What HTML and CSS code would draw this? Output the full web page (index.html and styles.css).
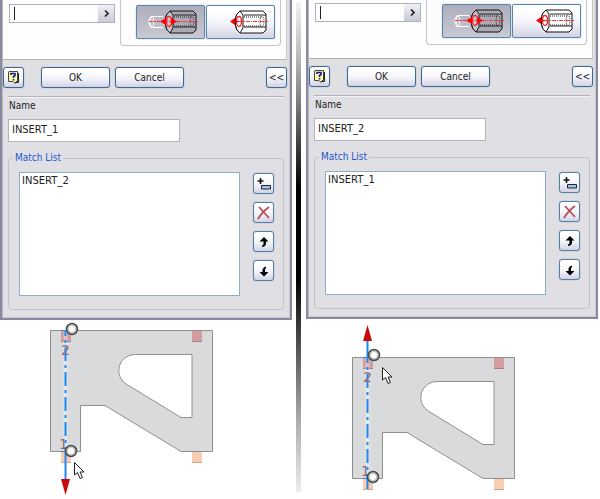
FILE: index.html
```
<!DOCTYPE html>
<html lang="en">
<head>
    <meta charset="UTF-8">
    <meta name="viewport" content="width=device-width, initial-scale=1.0">
    <title>iMate match list</title>
    <link rel="stylesheet" href="styles.css">
</head>
<body>
    <!-- shared drawings -->
    <svg class="defs" width="0" height="0" aria-hidden="true">
        <defs>
            <symbol id="cylinder" viewBox="0 0 34 24" overflow="visible">
                <path d="M5 1H28L31 4V20L28 23H5L1 18V6Z" fill="var(--body)" stroke="#111"/>
                <path d="M9 5H31M9 17H31" stroke="#222" fill="none"/>
                <path d="M5 1L8 5V18L5 23L2 20L0.500 15V8L2 4Z" fill="var(--face)" stroke="#111"/>
                <path d="M9 7H27M9 16H27" stroke="#222" stroke-dasharray="1 1" fill="none"/>
                <ellipse cx="27" cy="11.500" rx="2" ry="5" stroke="#222" stroke-dasharray="1 1" fill="none"/>
                <ellipse cx="4" cy="11.500" rx="2.500" ry="5" fill="none" stroke="#f22" stroke-width="1.300"/>
                <path d="M4 11.500H33" stroke="#f33" stroke-dasharray="4 1 1 1"/>
            </symbol>
            <symbol id="bracket" viewBox="0 0 164 134" overflow="visible">
                <path d="M11 122h10v10h-10zM142 122h10v10h-10z" fill="#f8cdb0"/>
                <path d="M11 132.500h10M142 132.500h10" stroke="#c9a48c"/>
                <path fill-rule="evenodd" fill="#d9dadb" stroke="#8f8f8f" d="M0.500 0.500H162.500V121.500H131L55 75.500H30.500V121.500H0.500ZM142 24.500H85.500A16 16 0 0 0 77 54.500L131 87.500H142Z"/>
                <path d="M11 1h10v10h-10zM142 1h10v10h-10z" fill="#d49c9f"/>
                <path d="M11 11.500h10M142 11.500h10" stroke="#a98085"/>
                <path d="M15.500 1V121" stroke="#fff" stroke-opacity=".35" stroke-width="4"/>
                <path d="M15.500 1V121" stroke="#1e88f5" stroke-width="2" stroke-dasharray="14 4 3 4" stroke-dashoffset="9"/>
                <text x="11" y="25" class="pin-no">2</text>
                <text x="9" y="119" class="pin-no">1</text>
                <path d="M11 0.500h5M11 121.500h5" stroke="#1e88f5"/>
            </symbol>
            <symbol id="ring" viewBox="0 0 14 14" overflow="visible">
                <circle cx="7" cy="7" r="5.500" fill="#c4c4c2" stroke="#444b4b" stroke-width="1.500"/>
                <circle cx="7" cy="7" r="3" fill="#fff"/>
            </symbol>
            <symbol id="pointer" viewBox="0 0 12 18" overflow="visible">
                <path d="M0.500 0.500V13L3.500 10.500L6 16.500L8.500 15.500L6 10H10Z" fill="#fff" stroke="#222"/>
            </symbol>
            <symbol id="help" viewBox="0 0 12 13" overflow="visible">
                <path d="M1 0.500H9.500V10.500H8L7 12.500L5 10.500H0.500V1Z" fill="#ffffa8" stroke="#444"/>
                <path d="M10.500 2V11.500H8" fill="none" stroke="#222"/>
                <path d="M3 4V2.500H7V4.500L5.500 5.500V7M5.500 8V9.500" fill="none" stroke="#1515a0" stroke-width="1.600"/>
            </symbol>
            <symbol id="add" viewBox="0 0 14 14" overflow="visible">
                <path d="M0.500 4H6.500M3.500 1V7" stroke="#111" stroke-width="1.600"/>
                <path d="M4.500 8.500H13.500V12H4.500Z" fill="#9fc5ee" stroke="#222"/>
            </symbol>
            <symbol id="remove" viewBox="0 0 14 14" overflow="visible">
                <path d="M2 1L12 12M12 1Q5 6 1 13" fill="none" stroke="#b94f52" stroke-width="1.800"/>
            </symbol>
            <symbol id="up" viewBox="0 0 14 14" overflow="visible">
                <path d="M7 2L11.500 6.500H9V9Q8.500 11.500 5 12V10.500Q6.500 10 6.500 9V6.500H2.500Z"/>
            </symbol>
            <symbol id="down" viewBox="0 0 14 14" overflow="visible">
                <path d="M7 12.500L2.500 8H5.500V6Q6 3 9 2.500V4Q8 4.500 8 6V8H11.500Z"/>
            </symbol>
        </defs>
    </svg>

    <main class="compare">
        <section class="side">
            <form class="dialog">
                <div class="options">
                    <div class="offset">
                        <input type="text" aria-label="Offset" value="">
                        <button type="button" aria-label="More offsets"><svg width="5" height="7"><path d="M1 0.500L4 3.500L1 6.500" fill="none" stroke="#222" stroke-width="1.600"/></svg></button>
                    </div>
                    <div class="solution">
                        <button type="button" class="pressed" aria-label="Opposed">
                            <svg width="52" height="24">
                                <path d="M18 6.500H6L4 10V14L6 17.500H18" fill="none" stroke="#fff"/>
                                <ellipse cx="7" cy="12" rx="2" ry="5" fill="none" stroke="#fff"/>
                                <use href="#cylinder" x="20" y="0" width="34" height="24"/>
                                <path d="M4 11.500H24" stroke="#f33" stroke-dasharray="3 1"/>
                                <path d="M15 11.500L21 8V15ZM32 11.500L26 8V15Z" fill="#f00"/>
                            </svg>
                        </button>
                        <button type="button" aria-label="Aligned">
                            <svg width="52" height="24">
                                <use href="#cylinder" x="20" y="0" width="34" height="24"/>
                                <path d="M15 11.500L20 8V15ZM19 11H24V12H19Z" fill="#f00"/>
                            </svg>
                        </button>
                    </div>
                </div>
                <div class="actions">
                    <button type="button" class="icon" aria-label="Help"><svg width="12" height="13"><use href="#help" width="12" height="13"/></svg></button>
                    <button type="button" class="wide">OK</button>
                    <button type="button" class="wide">Cancel</button>
                    <button type="button" class="icon less">&lt;&lt;</button>
                </div>
                <div class="details">
                    <label for="name-1">Name</label>
                    <input type="text" id="name-1" class="name" value="INSERT_1">
                    <fieldset>
                        <legend>Match List</legend>
                        <select size="8" aria-label="Match List">
                            <option>INSERT_2</option>
                        </select>
                        <div class="tools">
                            <button type="button" class="icon" aria-label="Add"><svg width="14" height="14"><use href="#add" width="14" height="14"/></svg></button>
                            <button type="button" class="icon" aria-label="Remove"><svg width="14" height="14"><use href="#remove" width="14" height="14"/></svg></button>
                            <button type="button" class="icon" aria-label="Move up"><svg width="14" height="14"><use href="#up" width="14" height="14"/></svg></button>
                            <button type="button" class="icon" aria-label="Move down"><svg width="14" height="14"><use href="#down" width="14" height="14"/></svg></button>
                        </div>
                    </fieldset>
                </div>
            </form>
            <svg class="part" width="290" height="178" role="img" aria-label="Bracket, axis pointing down">
                <g transform="translate(50 10)">
                    <use href="#bracket" width="164" height="134"/>
                    <path d="M15.500 121V149" stroke="#1e88f5" stroke-width="2"/>
                    <path d="M11 149H20L15.500 165Z" fill="#c90b0b"/>
                    <use href="#ring" x="15" y="-8" width="14" height="14"/>
                    <use href="#ring" x="14" y="114" width="14" height="14"/>
                    <use href="#pointer" x="24" y="132" width="12" height="18"/>
                </g>
            </svg>
        </section>

        <div class="divider"></div>

        <section class="side">
            <form class="dialog">
                <div class="options short">
                    <div class="offset">
                        <input type="text" aria-label="Offset" value="">
                        <button type="button" aria-label="More offsets"><svg width="5" height="7"><path d="M1 0.500L4 3.500L1 6.500" fill="none" stroke="#222" stroke-width="1.600"/></svg></button>
                    </div>
                    <div class="solution">
                        <button type="button" class="pressed" aria-label="Opposed">
                            <svg width="52" height="24">
                                <path d="M18 6.500H6L4 10V14L6 17.500H18" fill="none" stroke="#fff"/>
                                <ellipse cx="7" cy="12" rx="2" ry="5" fill="none" stroke="#fff"/>
                                <use href="#cylinder" x="20" y="0" width="34" height="24"/>
                                <path d="M4 11.500H24" stroke="#f33" stroke-dasharray="3 1"/>
                                <path d="M15 11.500L21 8V15ZM32 11.500L26 8V15Z" fill="#f00"/>
                            </svg>
                        </button>
                        <button type="button" aria-label="Aligned">
                            <svg width="52" height="24">
                                <use href="#cylinder" x="20" y="0" width="34" height="24"/>
                                <path d="M15 11.500L20 8V15ZM19 11H24V12H19Z" fill="#f00"/>
                            </svg>
                        </button>
                    </div>
                </div>
                <div class="actions">
                    <button type="button" class="icon" aria-label="Help"><svg width="12" height="13"><use href="#help" width="12" height="13"/></svg></button>
                    <button type="button" class="wide">OK</button>
                    <button type="button" class="wide">Cancel</button>
                    <button type="button" class="icon less">&lt;&lt;</button>
                </div>
                <div class="details">
                    <label for="name-2">Name</label>
                    <input type="text" id="name-2" class="name" value="INSERT_2">
                    <fieldset>
                        <legend>Match List</legend>
                        <select size="8" aria-label="Match List">
                            <option>INSERT_1</option>
                        </select>
                        <div class="tools">
                            <button type="button" class="icon" aria-label="Add"><svg width="14" height="14"><use href="#add" width="14" height="14"/></svg></button>
                            <button type="button" class="icon" aria-label="Remove"><svg width="14" height="14"><use href="#remove" width="14" height="14"/></svg></button>
                            <button type="button" class="icon" aria-label="Move up"><svg width="14" height="14"><use href="#up" width="14" height="14"/></svg></button>
                            <button type="button" class="icon" aria-label="Move down"><svg width="14" height="14"><use href="#down" width="14" height="14"/></svg></button>
                        </div>
                    </fieldset>
                </div>
            </form>
            <svg class="part" width="290" height="178" role="img" aria-label="Bracket, axis pointing up">
                <g transform="translate(46 38)">
                    <use href="#bracket" width="164" height="134"/>
                    <path d="M15.500 0V-17M15.500 117V132" stroke="#1e88f5" stroke-width="2"/>
                    <path d="M11 -16H20L15.500 -32Z" fill="#c90b0b"/>
                    <use href="#ring" x="15" y="-9" width="14" height="14"/>
                    <use href="#ring" x="14" y="113" width="14" height="14"/>
                    <use href="#pointer" x="30" y="10" width="12" height="18"/>
                </g>
            </svg>
        </section>
    </main>
</body>
</html>
```
FILE: styles.css
```
* {
    box-sizing: border-box;
}
body {
    margin: 0;
    background-color: white;
    font-family: "DejaVu Sans Condensed", "DejaVu Sans", sans-serif;
    font-size: 10px;
    color: #222;
}
.defs {
    position: absolute;
}
.compare {
    display: grid;
    grid-template-columns: 1fr 6px 1fr;
    column-gap: 4px;
    padding-right: 2px;
}
.side {
    min-width: 0;
}
.side svg {
    display: block;
    flex: none;
}
.divider {
    height: 490px;
    margin: 2px 1px 0 0;
    background: linear-gradient(#f2f2f2, #c0c0c0 10%, #808080 20%, #000 38%, #000 56%, #383838 66%, #aaa 85%, #ededed);
}
.dialog {
    margin: 0;
    background-color: #e0dfe4;
    border: solid #8a889f;
    border-width: 0 2px 2px;
    box-shadow: inset 1px 0 #b9b9c6, inset -1px -1px #c9c8d2;
}
button {
    display: flex;
    align-items: center;
    justify-content: center;
    padding: 0;
    font: inherit;
    color: #222;
    background: linear-gradient(#fff 20%, #f0f0f8 60%, #d3d2e4);
    border: 1px solid #3c6a92;
    border-radius: 3px;
    box-shadow: 0 0 1px #4d7ba3;
}
input {
    font: 11px "DejaVu Sans Condensed", "DejaVu Sans", sans-serif;
    color: #222;
    background-color: white;
}

/* top of the dialog */
.options {
    display: flex;
    align-items: flex-end;
    justify-content: space-between;
    height: 60px;
    margin: 0 3px 0 1px;
    padding: 0 5px 13px 6px;
    background-color: #fdfdfe;
    border-bottom: 1px solid #b5b5ae;
    border-right: 1px solid #cccbc2;
    overflow: hidden;
}
.short {
    height: 59px;
}
.offset {
    display: flex;
    width: 106px;
    height: 19px;
    margin-bottom: 23px;
    border: 1px solid #aab2bd;
}
.offset input {
    flex: 1;
    min-width: 0;
    padding: 0;
    margin: 2px 4px;
    border: none;
    border-left: 1px solid #222;
    outline: none;
}
.offset button {
    width: 16px;
    border: none;
    border-radius: 0;
    box-shadow: none;
    background: linear-gradient(#f0f0f6, #c9c9d9);
}
.solution {
    display: flex;
    gap: 1px;
    padding: 16px 5px 6px 15px;
    border: 1px solid #c3c3c8;
    border-top: none;
    border-radius: 0 0 4px 4px;
}
.solution button {
    --body: #fff;
    --face: #fff;
    width: 69px;
    height: 34px;
    border-color: #5c86a8;
    border-radius: 2px;
}
.solution .pressed {
    --body: #aaa9b4;
    --face: #c5c4cd;
    background: linear-gradient(#adadbd, #c9c9d4);
}
.solution svg {
    overflow: visible;
}

/* button row */
.actions {
    display: flex;
    padding: 7px 3px 0 1px;
}
.icon {
    width: 21px;
    height: 21px;
}
.wide {
    width: 69px;
    height: 21px;
    margin-left: 5px;
}
.icon + .wide {
    margin-left: 17px;
}
.less {
    margin-left: auto;
}

/* name and match list */
.details {
    margin: 8px 6px 0;
    padding: 2px 0 8px;
    border-top: 1px solid #b4b4b6;
    box-shadow: inset 0 1px #f4f4f6;
}
.details label {
    display: block;
    padding-left: 1px;
    line-height: 14px;
}
.name {
    display: block;
    width: 172px;
    height: 23px;
    margin: 6px 0 10px;
    padding: 0 3px 2px;
    border: 1px solid #b2b4ba;
}
fieldset {
    display: flex;
    gap: 13px;
    margin: 0;
    min-width: 0;
    padding: 8px 9px 13px 10px;
    border: 1px solid #c3c3ca;
    border-radius: 4px;
}
legend {
    margin-left: -6px;
    padding: 0 2px;
    line-height: 12px;
    color: #1f55cf;
}
select {
    flex: 1;
    min-width: 0;
    height: 124px;
    padding: 2px 0;
    font: 10px "DejaVu Sans", sans-serif;
    color: #222;
    background-color: white;
    border: 1px solid #8fadc4;
    border-radius: 0;
    overflow: hidden;
}
option {
    padding: 0 2px;
}
.tools {
    display: flex;
    flex-direction: column;
    gap: 8px;
    padding-top: 1px;
}
.tools .icon {
    border-color: #5480a6;
}

/* part drawing */
.part {
    max-width: 100%;
    overflow: visible;
}
.pin-no {
    font: 14px "DejaVu Sans", sans-serif;
    fill: #8d6972;
}
```
